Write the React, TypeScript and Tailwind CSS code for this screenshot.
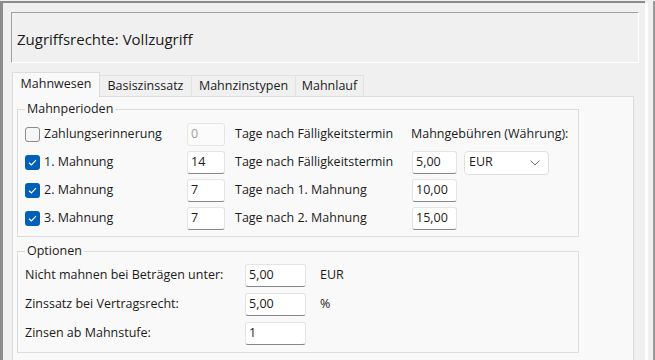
import type { ReactNode } from 'react';

const FONT = "font-['Open_Sans','Noto_Sans',sans-serif]";

function Check({ checked }: { checked: boolean }) {
  if (!checked) {
    return <div className="w-[15px] h-[15px] shrink-0 rounded-[3px] border border-[#8a8a8a] bg-[#f6f6f6]" />;
  }
  return (
    <div className="w-[15px] h-[15px] shrink-0 rounded-[3px] bg-[#005fb8] flex items-center justify-center">
      <svg width="15" height="15" viewBox="0 0 15 15">
        <path d="M4 7.7 L6.4 10 L11 5.2" fill="none" stroke="#ffffff" strokeWidth="1.2" />
      </svg>
    </div>
  );
}

function Field({ value, w, disabled }: { value: string; w: string; disabled?: boolean }) {
  return (
    <div
      className={`${w} h-[23px] shrink-0 rounded-[3px] border flex items-center pl-[3px] ${
        disabled
          ? 'bg-[#fbfbfb] border-[#e6e6e6] text-[#a2a2a2]'
          : 'bg-white border-[#e4e4e4] border-b-[#868686] text-[#1b1b1b]'
      }`}
    >
      {value}
    </div>
  );
}

function Group({ title, children, className = '' }: { title: string; children: ReactNode; className?: string }) {
  return (
    <fieldset className={`w-[562px] border border-[#dcdcdc] ${className}`}>
      <legend className="ml-[7px] px-[2px] leading-[16px] text-[#1b1b1b]">{title}</legend>
      {children}
    </fieldset>
  );
}

const periods = [
  { label: 'Zahlungserinnerung', checked: false, days: '0', text: 'Tage nach Fälligkeitstermin' },
  { label: '1. Mahnung', checked: true, days: '14', text: 'Tage nach Fälligkeitstermin', fee: '5,00' },
  { label: '2. Mahnung', checked: true, days: '7', text: 'Tage nach 1. Mahnung', fee: '10,00' },
  { label: '3. Mahnung', checked: true, days: '7', text: 'Tage nach 2. Mahnung', fee: '15,00' },
];

const options = [
  { label: 'Nicht mahnen bei Beträgen unter:', value: '5,00', unit: 'EUR' },
  { label: 'Zinssatz bei Vertragsrecht:', value: '5,00', unit: '%' },
  { label: 'Zinsen ab Mahnstufe:', value: '1', unit: '' },
];

const tabs = [
  { label: 'Basiszinssatz', w: 'w-[92px]' },
  { label: 'Mahnzinstypen', w: 'w-[104px]' },
  { label: 'Mahnlauf', w: 'w-[68px]' },
];

export default function App() {
  return (
    <div className={`w-[655px] h-[360px] overflow-hidden bg-[#f0f0f0] pt-px flex text-[12.5px] text-[#1b1b1b] ${FONT}`}>
      {/* main pane */}
      <div className="w-[645px] shrink-0 border-t-2 border-l-[3px] border-[#8c8c8c] flex flex-col">
        {/* access rights */}
        <div className="ml-[8px] mt-[9px] w-[628px] h-[51px] shrink-0 border border-[#a0a0a0] border-r-white border-b-white flex items-center pl-[5px] pt-[4px] text-[15px]">
          Zugriffsrechte: Vollzugriff
        </div>

        {/* tabs */}
        <div className="ml-[9px] mt-[9px] h-[24px] shrink-0 flex items-end">
          <div className="relative z-10 w-[88px] h-[25px] -mb-px bg-[#f9f9f9] border border-b-0 border-[#dcdcdc] flex items-center justify-center pb-[2px]">
            Mahnwesen
          </div>
          {tabs.map(t => (
            <div
              key={t.label}
              className={`${t.w} h-[21px] border border-b-0 border-l-0 border-[#e2e2e2] flex items-center justify-center`}
            >
              {t.label}
            </div>
          ))}
        </div>

        {/* tab page */}
        <div className="ml-[9px] w-[622px] h-[280px] shrink-0 bg-[#f9f9f9] border border-[#dcdcdc] pt-[4px] pl-[4px]">
          <Group title="Mahnperioden" className="pb-[6px]">
            <div className="pt-[6px] pl-[7px] flex flex-col gap-[5px]">
              {periods.map((p, i) => (
                <div key={p.label} className="h-[23px] flex items-center">
                  <div className="w-[162px] flex items-center gap-[4px]">
                    <Check checked={p.checked} />
                    <span>{p.label}</span>
                  </div>
                  <Field value={p.days} w="w-[38px]" disabled={!p.checked} />
                  <div className="w-[187px] pl-[10px]">{p.text}</div>
                  {i === 0 ? (
                    <span className="-ml-px">Mahngebühren (Währung):</span>
                  ) : (
                    <>
                      <Field value={p.fee ?? ''} w="w-[45px]" />
                      {i === 1 && (
                        <div className="ml-[7px] w-[85px] h-[24px] rounded-[4px] border border-[#e0e0e0] bg-white flex items-center justify-between pl-[4px] pr-[8px]">
                          <span>EUR</span>
                          <svg width="10" height="6" viewBox="0 0 10 6">
                            <path d="M0.5 0.5 L5 5 L9.5 0.5" fill="none" stroke="#6a6a6a" strokeWidth="1" />
                          </svg>
                        </div>
                      )}
                    </>
                  )}
                </div>
              ))}
            </div>
          </Group>

          <Group title="Optionen" className="mt-[6px] pb-[7px]">
            <div className="pt-[5px] pl-[7px] flex flex-col gap-[6px]">
              {options.map(o => (
                <div key={o.label} className="h-[23px] flex items-center">
                  <div className="w-[220px]">{o.label}</div>
                  <Field value={o.value} w="w-[61px]" />
                  <div className="pl-[14px]">{o.unit}</div>
                </div>
              ))}
            </div>
          </Group>
        </div>
      </div>

      {/* splitter */}
      <div className="w-[3px] shrink-0 bg-white mt-[2px]" />
      <div className="flex-1 border-r-2 border-[#9a9a9a]" />
    </div>
  );
}
